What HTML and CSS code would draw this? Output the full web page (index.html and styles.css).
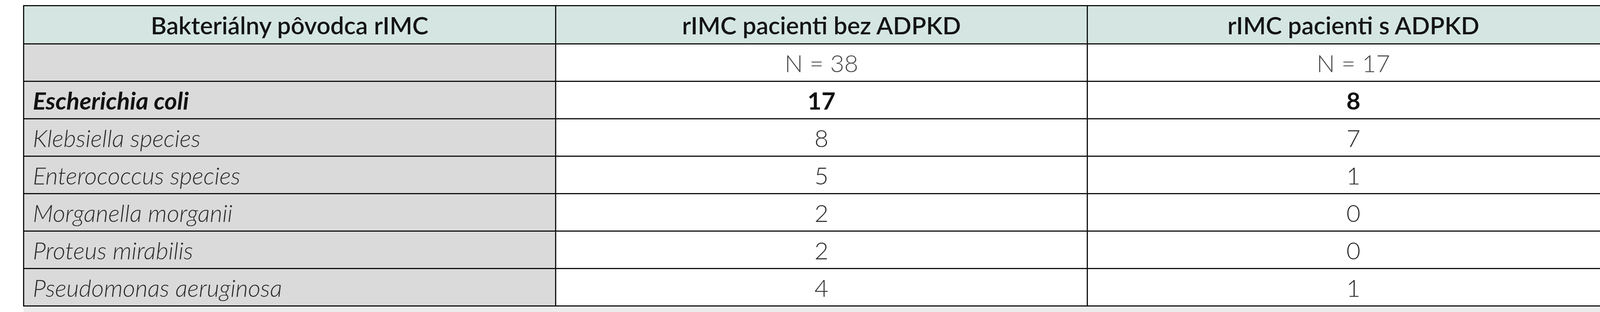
FILE: index.html
```html
<!DOCTYPE html>
<html lang="sk">
<head>
<meta charset="utf-8">
<title>Bakteriálny pôvodca rIMC</title>
<link rel="stylesheet" href="styles.css">
</head>
<body>
<div class="page">
  <table class="data">
    <colgroup>
      <col class="c1"><col class="c2"><col class="c3">
    </colgroup>
    <thead>
      <tr class="head">
        <th>Bakteriálny pôvodca rIMC</th>
        <th>rIMC pacienti bez ADPKD</th>
        <th>rIMC pacienti s ADPKD</th>
      </tr>
    </thead>
    <tbody>
      <tr>
        <td class="name"></td>
        <td class="num n">N = 38</td>
        <td class="num n">N = 17</td>
      </tr>
      <tr class="strong">
        <td class="name">Escherichia coli</td>
        <td class="num">17</td>
        <td class="num">8</td>
      </tr>
      <tr>
        <td class="name">Klebsiella species</td>
        <td class="num">8</td>
        <td class="num">7</td>
      </tr>
      <tr>
        <td class="name">Enterococcus species</td>
        <td class="num">5</td>
        <td class="num">1</td>
      </tr>
      <tr>
        <td class="name">Morganella morganii</td>
        <td class="num">2</td>
        <td class="num">0</td>
      </tr>
      <tr>
        <td class="name">Proteus mirabilis</td>
        <td class="num">2</td>
        <td class="num">0</td>
      </tr>
      <tr>
        <td class="name">Pseudomonas aeruginosa</td>
        <td class="num">4</td>
        <td class="num">1</td>
      </tr>
    </tbody>
  </table>
  <div class="tail"></div>
</div>
</body>
</html>
```

FILE: styles.css
```css
html, body {
  margin: 0;
  padding: 0;
  background: #ffffff;
  overflow: hidden;
}

.page {
  padding: 13px 0 0 59px;
  width: 4088px;
  height: 787px;
  overflow: hidden;
}

.data {
  width: 4088px;
  table-layout: fixed;
  border-collapse: collapse;
  font-family: Lato, "Open Sans", "DejaVu Sans", sans-serif;
  font-size: 62px;
  line-height: 1;
}

.data th,
.data td {
  box-sizing: border-box;
  border: 3px solid #111111;
  padding: 0 22px;
  height: 96px;
  vertical-align: middle;
  white-space: nowrap;
  overflow: hidden;
}

.head th {
  background: #d5e6e2;
  color: #141414;
  font-weight: 600;
  text-align: center;
  height: 98px;
}

.name {
  background: #dadada;
  color: #2c2c2c;
  font-style: italic;
  font-weight: 300;
  text-align: left;
}

.num {
  background: #ffffff;
  color: #2e2e2e;
  font-weight: 300;
  text-align: center;
}

.num.n {
  color: #4a4a4a;
}

.strong .name,
.strong .num {
  font-weight: 700;
  color: #111111;
}

.tail {
  height: 14px;
  margin-left: 1px;
  width: 4086px;
  background: #ececec;
}
```
